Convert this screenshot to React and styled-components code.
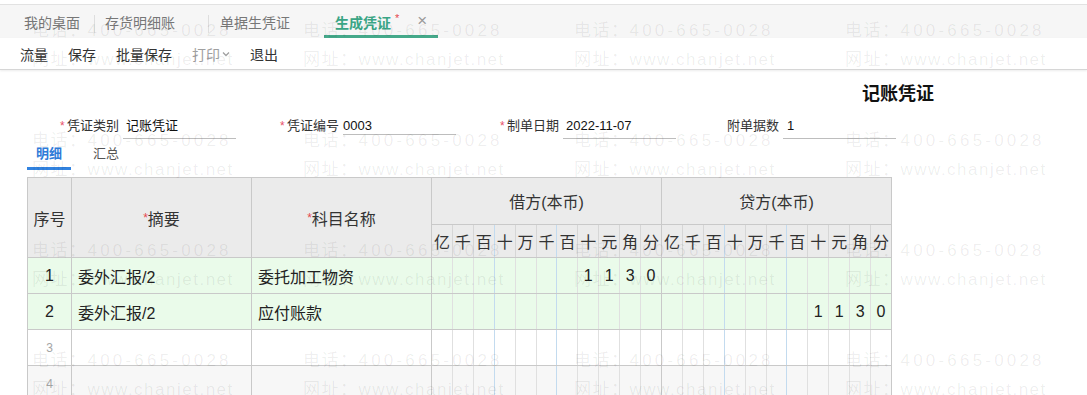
import React from "react";
import styled, { createGlobalStyle } from "styled-components";

const Global = createGlobalStyle`
  html, body { margin: 0; padding: 0; overflow: hidden; background: #fff; }
  body { font-family: "Liberation Sans", "Noto Sans CJK SC", sans-serif; color: #333; }
`;

const Page = styled.div`
  position: relative;
  width: 1087px;
  height: 395px;
  overflow: hidden;
  background: #fff;
`;

const TabBar = styled.div`
  margin-top: 4px;
  height: 33px;
  border-top: 1px solid #e2e2e2;
  background: #f6f6f6;
  display: flex;
  align-items: stretch;
`;

const TabItem = styled.div`
  position: relative;
  box-sizing: border-box;
  width: ${(p) => p.$w}px;
  padding-left: ${(p) => p.$pl}px;
  display: flex;
  align-items: center;
  font-size: 14px;
  color: ${(p) => (p.$active ? "#3aa585" : "#777")};
  font-weight: ${(p) => (p.$active ? 700 : 400)};
  border-bottom: 3px solid ${(p) => (p.$active ? "#45a98a" : "transparent")};
  padding-top: 3px;
  &::after {
    content: "";
    display: ${(p) => (p.$sep ? "block" : "none")};
    position: absolute;
    right: 0;
    top: 10px;
    height: 18px;
    width: 1px;
    background: #dedede;
  }
`;

const Star = styled.span`
  color: #e5474f;
  font-size: ${(p) => p.$size || 10}px;
  font-weight: 400;
  position: relative;
  top: ${(p) => p.$top ?? -3}px;
  margin: 0 ${(p) => p.$mr ?? 1}px 0 ${(p) => p.$ml || 0}px;
`;

const Close = styled.span`
  margin-left: 17px;
  font-size: 17px;
  font-weight: 400;
  color: #9a9a9a;
  position: relative;
  top: -1px;
`;

const Toolbar = styled.div`
  height: 31px;
  border-bottom: 1px solid #d6d6d6;
  box-shadow: 0 1px 2px rgba(0, 0, 0, 0.08);
  display: flex;
  align-items: center;
  gap: 20px;
  padding-left: 20px;
`;

const ToolButton = styled.span`
  font-size: 14px;
  color: ${(p) => (p.$disabled ? "#a0a0a0" : "#333")};
  display: inline-flex;
  align-items: center;
  gap: 2px;
`;

const TitleRow = styled.div`
  display: flex;
  justify-content: flex-end;
  padding: 12px 153px 0 0;
  height: 24px;
`;

const Title = styled.h1`
  margin: 0;
  font-size: 18px;
  line-height: 24px;
  font-weight: 700;
  color: #111;
`;

const FormRow = styled.div`
  display: grid;
  grid-template-columns: repeat(4, 220px);
  padding: 10px 0 0 60px;
  height: 24px;
`;

const Field = styled.div`
  display: flex;
  align-items: flex-start;
`;

const FieldStar = styled.span`
  width: 7px;
  color: #e8506a;
  font-size: 12px;
  line-height: 20px;
  visibility: ${(p) => (p.$hidden ? "hidden" : "visible")};
`;

const FieldLabel = styled.span`
  font-size: 13px;
  line-height: 20px;
  color: #333;
  white-space: nowrap;
`;

const FieldInput = styled.div`
  box-sizing: border-box;
  margin-left: 4px;
  width: 113px;
  height: ${(p) => p.$h}px;
  padding-left: ${(p) => p.$pl}px;
  border-bottom: 1px solid #bdbdbd;
  font-size: 13px;
  line-height: 20px;
  color: #111;
`;

const SubTabs = styled.div`
  display: flex;
  gap: 13px;
  padding-left: 27px;
  height: 30px;
`;

const SubTab = styled.div`
  box-sizing: border-box;
  height: 30px;
  padding: 0 9px;
  font-size: 13px;
  line-height: 28px;
  color: ${(p) => (p.$active ? "#2f7bd8" : "#555")};
  font-weight: ${(p) => (p.$active ? 700 : 400)};
  border-bottom: 3px solid ${(p) => (p.$active ? "#3283e0" : "transparent")};
`;

const TableWrap = styled.div`
  padding: 7px 0 0 27px;
`;

const Table = styled.table`
  width: 865px;
  border-collapse: collapse;
  table-layout: fixed;
  font-size: 16px;
  color: #333;
`;

const HeadCell = styled.th`
  background: #ebebeb;
  border: 1px solid #c9c9c9;
  font-weight: 400;
  height: ${(p) => p.$h}px;
  padding: 0;
  text-align: center;
  color: #333;
`;

const DigitHead = styled.th`
  background: #ebebeb;
  border-top: 1px solid #c9c9c9;
  border-bottom: 1px solid #c9c9c9;
  border-left: 1px solid ${(p) => p.$line};
  border-right: 1px solid ${(p) => p.$rline};
  font-weight: 400;
  height: 32px;
  padding: 0;
  text-align: center;
  color: #333;
  font-size: 16px;
`;

const BodyRow = styled.tr`
  background: ${(p) => p.$bg};
  height: 36px;
`;

const Cell = styled.td`
  border: 1px solid #c9c9c9;
  padding: 0 6px;
  text-align: left;
  white-space: nowrap;
  overflow: hidden;
  color: #222;
`;

const RowNo = styled.td`
  border: 1px solid #c9c9c9;
  padding: 0;
  text-align: center;
  color: ${(p) => (p.$faint ? "#a5a5a5" : "#222")};
  font-size: ${(p) => (p.$faint ? 12 : 16)}px;
`;

const DigitCell = styled.td`
  border-top: 1px solid #c9c9c9;
  border-bottom: 1px solid #c9c9c9;
  border-left: 1px solid ${(p) => p.$line};
  border-right: 1px solid ${(p) => p.$rline};
  padding: 0;
  text-align: center;
  color: #222;
`;

const Watermark = styled.div`
  position: absolute;
  inset: 0;
  pointer-events: none;
  display: grid;
  grid-template-columns: repeat(4, 271px);
  grid-auto-rows: 110px;
  padding: 16px 0 0 32px;
  color: rgba(0, 0, 0, 0.07);
  font-size: 17px;
  line-height: 29px;
  z-index: 5;
`;

const WmCell = styled.div`
  display: flex;
  flex-direction: column;
  white-space: nowrap;
`;

const WmPrefix = styled.span`
  letter-spacing: 1.5px;
`;

const WmText = styled.span`
  letter-spacing: ${(p) => p.$ls}px;
`;

const DIGITS = ["亿", "千", "百", "十", "万", "千", "百", "十", "元", "角", "分"];

const innerLine = (i, head) => {
  if (i === 0) return "#c9c9c9";
  if (i === 3 || i === 6) return "#c3dbef";
  return head ? "#d6d6d6" : "#e0e0e0";
};

const toCells = (s) => {
  const arr = new Array(11).fill("");
  const chars = s.split("");
  chars.forEach((c, k) => {
    arr[11 - chars.length + k] = c;
  });
  return arr;
};

const rows = [
  { no: "1", summary: "委外汇报/2", account: "委托加工物资", debit: "1130", credit: "", bg: "#eafbea" },
  { no: "2", summary: "委外汇报/2", account: "应付账款", debit: "", credit: "1130", bg: "#eafbea" },
  { no: "3", summary: "", account: "", debit: "", credit: "", bg: "#ffffff", faint: true },
  { no: "4", summary: "", account: "", debit: "", credit: "", bg: "#f7f7f7", faint: true },
];

const ChevronDown = () => (
  <svg width="8" height="6" viewBox="0 0 8 6" fill="none">
    <path d="M1 1.5 L4 4.5 L7 1.5" stroke="#a0a0a0" strokeWidth="1.3" />
  </svg>
);

function AmountCells({ value }) {
  return toCells(value).map((d, i) => (
    <DigitCell key={i} $line={innerLine(i, false)} $rline={i === 10 ? "#c9c9c9" : innerLine(i + 1, false)}>
      {d}
    </DigitCell>
  ));
}

const fields = [
  { label: "凭证类别", value: "记账凭证", h: 23, pl: 3, req: true },
  { label: "凭证编号", value: "0003", h: 19, pl: 0, req: true },
  { label: "制单日期", value: "2022-11-07", h: 23, pl: 3, req: true },
  { label: "附单据数", value: "1", h: 23, pl: 4, req: false },
];

export default function App() {
  const wm = [];
  for (let r = 0; r < 4; r++) {
    for (let c = 0; c < 4; c++) {
      wm.push(
        <WmCell key={`${r}-${c}`}>
          <span>
            <WmPrefix>电话：</WmPrefix>
            <WmText $ls={3.2}>400-665-0028</WmText>
          </span>
          <span>
            <WmPrefix>网址：</WmPrefix>
            <WmText $ls={1.5}>www.chanjet.net</WmText>
          </span>
        </WmCell>
      );
    }
  }

  return (
    <Page>
      <Global />
      <TabBar>
        <TabItem $w={95} $pl={24} $sep>我的桌面</TabItem>
        <TabItem $w={114} $pl={10} $sep>存货明细账</TabItem>
        <TabItem $w={115} $pl={11}>单据生凭证</TabItem>
        <TabItem $w={114} $pl={11} $active>
          生成凭证<Star $size={11} $top={-4} $ml={4}>*</Star>
          <Close>×</Close>
        </TabItem>
      </TabBar>
      <Toolbar>
        <ToolButton>流量</ToolButton>
        <ToolButton>保存</ToolButton>
        <ToolButton>批量保存</ToolButton>
        <ToolButton $disabled>
          打印
          <ChevronDown />
        </ToolButton>
        <ToolButton>退出</ToolButton>
      </Toolbar>

      <TitleRow>
        <Title>记账凭证</Title>
      </TitleRow>

      <FormRow>
        {fields.map((f) => (
          <Field key={f.label}>
            <FieldStar $hidden={!f.req}>*</FieldStar>
            <FieldLabel>{f.label}</FieldLabel>
            <FieldInput $h={f.h} $pl={f.pl}>{f.value}</FieldInput>
          </Field>
        ))}
      </FormRow>

      <SubTabs>
        <SubTab $active>明细</SubTab>
        <SubTab>汇总</SubTab>
      </SubTabs>

      <TableWrap>
        <Table>
          <colgroup>
            <col style={{ width: 44 }} />
            <col style={{ width: 180 }} />
            <col style={{ width: 180 }} />
            {Array.from({ length: 22 }).map((_, i) => (
              <col key={i} />
            ))}
          </colgroup>
          <thead>
            <tr>
              <HeadCell rowSpan={2} $h={46}>序号</HeadCell>
              <HeadCell rowSpan={2} $h={46}>
                <Star $size={12} $top={-3} $mr={0}>*</Star>摘要
              </HeadCell>
              <HeadCell rowSpan={2} $h={46}>
                <Star $size={12} $top={-3} $mr={0}>*</Star>科目名称
              </HeadCell>
              <HeadCell colSpan={11} $h={46}>借方(本币)</HeadCell>
              <HeadCell colSpan={11} $h={46}>贷方(本币)</HeadCell>
            </tr>
            <tr>
              {[...DIGITS, ...DIGITS].map((d, i) => {
                const k = i % 11;
                return (
                  <DigitHead
                    key={i}
                    $line={innerLine(k, true)}
                    $rline={k === 10 ? "#c9c9c9" : innerLine(k + 1, true)}
                  >
                    {d}
                  </DigitHead>
                );
              })}
            </tr>
          </thead>
          <tbody>
            {rows.map((r) => (
              <BodyRow key={r.no} $bg={r.bg}>
                <RowNo $faint={r.faint}>{r.no}</RowNo>
                <Cell>{r.summary}</Cell>
                <Cell>{r.account}</Cell>
                <AmountCells value={r.debit} />
                <AmountCells value={r.credit} />
              </BodyRow>
            ))}
          </tbody>
        </Table>
      </TableWrap>

      <Watermark aria-hidden="true">{wm}</Watermark>
    </Page>
  );
}
